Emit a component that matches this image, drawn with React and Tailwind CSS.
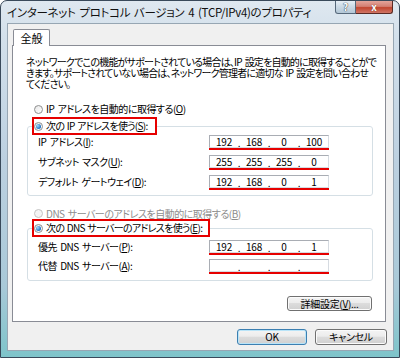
import React from 'react';

const jp = "font-['Noto_Sans_CJK_JP',sans-serif] [font-feature-settings:'palt'] [word-spacing:1.5px]";

function Key({k}) {
  return (
    <>
      (<span className="underline underline-offset-[1px]">{k}</span>)
    </>
  );
}

function Radio({checked, disabled}) {
  return (
    <span
      className={
        'flex h-[9px] w-[9px] shrink-0 items-center justify-center rounded-full border ' +
        (disabled
          ? 'border-[#c4c4c4] bg-[#f4f4f4]'
          : 'border-[#8e8f8f] bg-[linear-gradient(135deg,#e8e8e8,#ffffff)]')
      }
    >
      {checked && (
        <span className="h-[5px] w-[5px] rounded-full bg-[radial-gradient(circle_at_35%_35%,#9fd8f8,#1e6fc4_70%)]" />
      )}
    </span>
  );
}

function IpBox({parts}) {
  return (
    <div className="w-[120px]">
      <div className="flex h-[13px] items-center border border-[#a9adb4] border-b-[#d6dbe1] border-r-[#d6dbe1] bg-white px-[1px] text-[10px] leading-[11px] tracking-[-0.2px] text-black">
        {parts.map((p, i) => (
          <React.Fragment key={i}>
            {i > 0 && <span className="w-[4px] self-end text-center leading-[9px]">.</span>}
            <span className="flex-1 text-center">{p}</span>
          </React.Fragment>
        ))}
      </div>
      <div className="h-[2px] bg-[#e60000]" />
    </div>
  );
}

function Row({label, parts, h, top}) {
  return (
    <div className={'flex items-start pl-[10px] ' + h}>
      <div className={'w-[171px] whitespace-nowrap text-[10px] leading-[13px] tracking-[-0.5px] ' + top}>{label}</div>
      <div className={top}>
        <IpBox parts={parts} />
      </div>
    </div>
  );
}

function Btn({children, def, className}) {
  return (
    <div
      className={
        'flex items-center justify-center rounded-[3px] border text-[10px] leading-none tracking-[-0.3px] text-black ' +
        'bg-[linear-gradient(#f4f4f4_0%,#ececec_45%,#dcdcdc_50%,#d0d0d0_100%)] ' +
        (def
          ? 'border-[#3c7fb1] shadow-[inset_0_0_0_1px_#b9e4f8] '
          : 'border-[#707070] shadow-[inset_0_0_0_1px_#fbfbfb] ') +
        className
      }
    >
      {children}
    </div>
  );
}

export default function App() {
  return (
    <div
      className={
        'flex h-[358px] w-[400px] flex-col overflow-hidden rounded-t-[7px] border border-[#39495a] pb-[6px] pl-[6px] pr-[5px] text-black ' +
        'bg-[linear-gradient(180deg,#dfe8f0_0%,#d3e0eb_10%,#bcd0e0_45%,#a9c9d8_80%,#7ec4ca_100%)] ' +
        jp
      }
    >
      {/* title bar */}
      <div className="flex h-[22px] shrink-0">
        <div className="flex-1 whitespace-nowrap pt-[3px] text-[11.5px] leading-[16px] tracking-[-0.3px] text-[#111]">
          インターネット プロトコル バージョン 4 (TCP/IPv4)のプロパティ
        </div>
        <div className="mr-[1px] flex h-[13px] self-start">
          <div className="flex w-[21px] items-center justify-center rounded-bl-[3px] border border-t-0 border-[#56687a] bg-[linear-gradient(#e6eef5_0%,#c9d8e4_50%,#b3c7d6_100%)] text-[10px] font-bold leading-[10px] text-white [text-shadow:0_0_1px_#2a3a4a,0_0_1px_#2a3a4a]">
            ?
          </div>
          <div className="flex w-[37px] items-center justify-center rounded-br-[3px] border border-l-0 border-t-0 border-[#5a2a24] bg-[linear-gradient(#e4a49a_0%,#d47f72_45%,#c2452f_55%,#cf7565_100%)] text-[10px] font-bold leading-[10px] text-white [text-shadow:0_0_1px_#5a1a10]">
            x
          </div>
        </div>
      </div>

      {/* client area */}
      <div className="flex h-[328px] flex-col border border-[#97a6b3] bg-[#f0f0f0] pl-[4px] pr-[7px] pt-[5px]">
        <div className="relative z-10 -mb-[1px] ml-[1px] flex h-[17px] w-[37px] items-center justify-center rounded-t-[2px] border border-b-0 border-[#898c95] bg-white text-[11px] leading-none">
          全般
        </div>
        <div className="flex h-[277px] w-[374px] flex-col border border-[#898c95] bg-white">
          <div className="mt-[10px] pl-[13px] text-[10px] leading-[11px] tracking-[-0.8px]">
            <div className="whitespace-nowrap">ネットワークでこの機能がサポートされている場合は、IP 設定を自動的に取得することがで</div>
            <div className="whitespace-nowrap">きます。サポートされていない場合は、ネットワーク管理者に適切な IP 設定を問い合わせ</div>
            <div className="whitespace-nowrap">てください。</div>
          </div>

          <div className="mt-[13px] flex h-[14px] items-center pl-[21px] text-[10px] leading-none tracking-[-0.5px]">
            <Radio />
            <span className="ml-[3px] whitespace-nowrap">IP アドレスを自動的に取得する<Key k="O" /></span>
          </div>

          <fieldset className="ml-[14px] mt-[1px] w-[346px] rounded-[3px] border border-[#d5dfe5]">
            <legend className="ml-[4px] flex h-[18px] w-[125px] items-center border-2 border-[#e60000] bg-white text-[10px] leading-none tracking-[-0.7px] [word-spacing:1px]">
              <Radio checked />
              <span className="ml-[3px] whitespace-nowrap">次の IP アドレスを使う<Key k="S" />:</span>
            </legend>
            <Row h="h-[20px]" top="" label={<>IP アドレス<Key k="I" />:</>} parts={['192', '168', '0', '100']} />
            <Row h="h-[20px]" top="" label={<>サブネット マスク<Key k="U" />:</>} parts={['255', '255', '255', '0']} />
            <Row h="h-[20px]" top="" label={<>デフォルト ゲートウェイ<Key k="D" />:</>} parts={['192', '168', '0', '1']} />
          </fieldset>

          <div className="mt-[12px] flex h-[11px] items-center pl-[21px] text-[10px] leading-none tracking-[-0.5px] text-[#8d8d8d]">
            <Radio disabled />
            <span className="ml-[3px] whitespace-nowrap">DNS サーバーのアドレスを自動的に取得する<Key k="B" /></span>
          </div>

          <fieldset className="ml-[14px] w-[346px] rounded-[3px] border border-[#d5dfe5] pb-[5px]">
            <legend className="ml-[4px] flex h-[18px] w-[178px] items-center border-2 border-[#e60000] bg-white text-[10px] leading-none tracking-[-0.7px] [word-spacing:1px]">
              <Radio checked />
              <span className="ml-[3px] whitespace-nowrap">次の DNS サーバーのアドレスを使う<Key k="E" />:</span>
            </legend>
            <Row h="h-[19px]" top="mt-[3px]" label={<>優先 DNS サーバー<Key k="P" />:</>} parts={['192', '168', '0', '1']} />
            <Row h="h-[19px]" top="mt-[3px]" label={<>代替 DNS サーバー<Key k="A" />:</>} parts={['', '', '', '']} />
          </fieldset>

          <div className="mr-[13px] mt-[15px] flex justify-end">
            <Btn className="h-[15px] w-[85px]">
              詳細設定<Key k="V" />...
            </Btn>
          </div>
        </div>

        <div className="-mr-[1px] mt-[7px] flex justify-end gap-[8px]">
          <Btn def className="h-[16px] w-[70px]">OK</Btn>
          <Btn className="h-[16px] w-[72px]">キャンセル</Btn>
        </div>
      </div>
    </div>
  );
}
